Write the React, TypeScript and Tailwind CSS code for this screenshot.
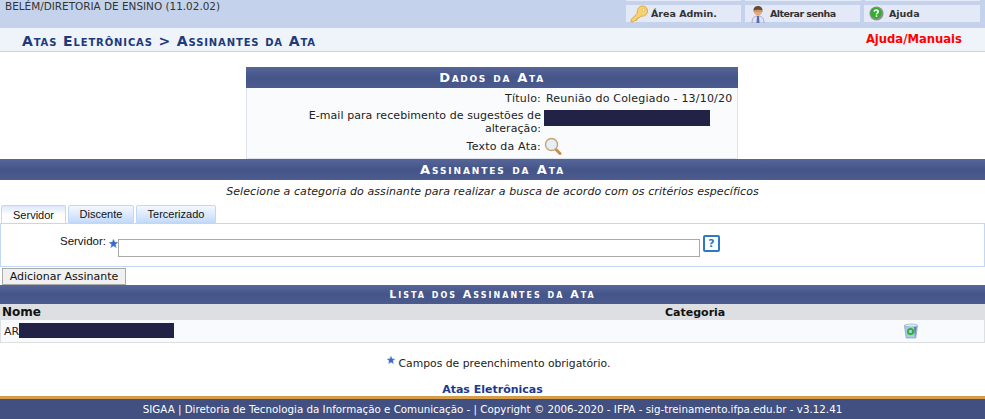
const verdana = "font-['DejaVu_Sans',Verdana,sans-serif]"

const Star = ({ className = '' }: { className?: string }) => (
  <svg viewBox="0 0 10 10" className={className}>
    <path
      d="M5 0 6.400 3.400 10 3.700 7.300 6 8.100 9.600 5 7.700 1.900 9.600 2.700 6 0 3.700 3.600 3.400Z"
      fill="#3a6bc8"
      stroke="#7fa4e2"
      strokeWidth=".4"
    />
  </svg>
)

const KeyIcon = () => (
  <svg viewBox="0 0 18 18" className="h-[18px] w-[18px]">
    <path
      d="M1 14.500 7.300 8.400C6.800 4.500 9 1 12.500 1 15.500 1 17.500 3 17.500 6c0 3.500-3.200 5.700-6.700 5.100L9.500 12.500H8V14H6.500v1.500H4.500L3 17H1Z"
      fill="#f6d36f"
      stroke="#dba94a"
      strokeWidth="1"
      strokeLinejoin="round"
    />
    <circle cx="13.500" cy="4.800" r="1.400" fill="#fdf2c4" stroke="#dba94a" strokeWidth=".6" />
  </svg>
)

const PersonIcon = () => (
  <svg viewBox="0 0 16 18" className="h-[18px] w-[16px]">
    <path d="M2 18c0-5 2-7 6-7s6 2 6 7Z" fill="#dfe5f5" stroke="#8a97c4" strokeWidth=".7" />
    <path d="M7 11h2l.5 7h-3Z" fill="#5a6aa8" />
    <circle cx="8" cy="6" r="4.400" fill="#e8a878" />
    <path d="M3.500 5.500C3.500 2 6 1 8 1s4.500 1 4.500 4.500C10 4.500 6 4.500 3.500 5.500Z" fill="#6b4a2c" />
    <rect x="3.500" y="5.500" width="9" height="1" fill="#9a8a78" />
  </svg>
)

const HelpIcon = () => (
  <svg viewBox="0 0 16 16" className="h-[15px] w-[15px]">
    <circle cx="8" cy="8" r="7.500" fill="#8f8f8f" />
    <circle cx="7.500" cy="7.500" r="6" fill="#2fb02a" />
    <path
      d="M5.500 6.200C5.600 4.800 6.500 4.300 7.600 4.300c1.300 0 2.200.7 2.200 1.800 0 1.500-1.900 1.500-1.900 3"
      fill="none"
      stroke="#fff"
      strokeWidth="1.600"
    />
    <rect x="7.100" y="10" width="1.700" height="1.700" fill="#fff" />
  </svg>
)

const LensIcon = () => (
  <svg viewBox="0 0 18 18" className="h-[18px] w-[18px]">
    <path d="M11 11.500 16 16.500" stroke="#c98f4e" strokeWidth="3" strokeLinecap="round" />
    <circle cx="7.500" cy="7.500" r="6" fill="#e6eef8" stroke="#cba56f" strokeWidth="1.400" />
  </svg>
)

const TrashIcon = () => (
  <svg viewBox="0 0 16 16" className="h-4 w-4">
    <path d="M1.500 2.500h13L12.800 15H3.200Z" fill="#a9cbe6" stroke="#6b93b3" strokeWidth=".6" />
    <ellipse cx="8" cy="2.500" rx="6.500" ry="1.500" fill="#d8e8f4" stroke="#7ea3c1" strokeWidth=".6" />
    <circle cx="7.500" cy="8.500" r="2.600" fill="none" stroke="#2fae2c" strokeWidth="1.800" />
    <path d="M11 4 12 14.700 13.500 4Z" fill="#5f8299" />
  </svg>
)

const TopButton = ({
  icon,
  label,
  className,
  labelClass = '',
}: {
  icon: React.ReactNode
  label: string
  className: string
  labelClass?: string
}) => (
  <div className={`flex h-[17px] items-center bg-[#e3e9f6] ${className}`}>
    <span className="flex w-[25px] shrink-0 justify-center">{icon}</span>
    <span className={`text-[9.500px] font-bold text-[#333] ${labelClass}`}>{label}</span>
  </div>
)

const Bar = ({ title, className = '' }: { title: string; className?: string }) => (
  <div
    className={`flex items-center justify-center bg-gradient-to-b from-[#566697] via-[#45558a] to-[#4b5b8e] font-bold text-white [font-variant:small-caps] ${className}`}
  >
    {title}
  </div>
)

const Tab = ({ label, active }: { label: string; active?: boolean }) => (
  <div
    className={`flex items-center justify-center rounded-t-[2px] border border-[#c0d8f5] font-['Liberation_Sans',Arial,sans-serif] text-[11px] text-[#111] ${
      active
        ? '-mb-px h-[19px] w-[65px] border-b-0 bg-gradient-to-b from-[#dbe8fb] via-white to-white'
        : 'h-[18px] bg-gradient-to-b from-[#f4f8fe] to-[#c6dcfa]'
    }`}
  >
    {label}
  </div>
)

export default function App() {
  return (
    <div className={`flex h-[419px] w-[985px] flex-col overflow-hidden bg-white text-[11px] leading-[13px] text-[#222] ${verdana}`}>
      <div className="flex h-[28px] justify-between bg-[#c4d2eb]">
        <div className="pl-[5px] text-[10.450px] text-[#333]">BELÉM/DIRETORIA DE ENSINO (11.02.02)</div>
        <div className="flex w-[359px] flex-col pr-[5px]">
          <div className="flex h-px gap-1">
            <span className="flex-1 bg-[#e3e9f6]" />
            <span className="flex-1 bg-[#e3e9f6]" />
            <span className="flex-1 bg-[#e3e9f6]" />
          </div>
          <div className="mt-1 flex gap-1">
            <TopButton className="w-[115px]" icon={<KeyIcon />} label="Área Admin." />
            <TopButton className="w-[115px]" icon={<PersonIcon />} label="Alterar senha" labelClass="tracking-[-0.55px]" />
            <TopButton className="w-[116px]" icon={<HelpIcon />} label="Ajuda" />
          </div>
        </div>
      </div>

      <div className="flex h-[24px] items-center justify-between border-b border-[#c8d3e6] bg-[#eff3fa] pl-[22px] pr-[23px]">
        <div className="pt-[3px] text-[14px] font-bold tracking-[0.87px] text-[#1c3a7c] [font-variant:small-caps]">
          Atas Eletrônicas &gt; Assinantes da Ata
        </div>
        <div className="text-[11.600px] font-bold text-[#f00]">Ajuda/Manuais</div>
      </div>

      <div className="mt-[15px] ml-[246px] w-[492px]">
        <Bar title="Dados da Ata" className="h-[21px] text-[13px] tracking-[1.700px]" />
        <div className="h-[71px] border-x border-b border-[#dfe3ee] bg-[#f9fbfd] pt-[4px] tracking-[0.2px] text-[#222]">
          <div className="flex items-center">
            <div className="w-[294px] text-right">Título:</div>
            <div className="pl-[5px]">Reunião do Colegiado - 13/10/20</div>
          </div>
          <div className="mt-[4px] flex">
            <div className="w-[294px] pl-[40px] text-right tracking-[0.07px]">E-mail para recebimento de sugestões de alteração:</div>
            <div className="ml-[3px] mt-px h-[16px] w-[166px] bg-[#212245]" />
          </div>
          <div className="mt-[2px] flex items-center">
            <div className="w-[294px] text-right">Texto da Ata:</div>
            <div className="pl-[3px]">
              <LensIcon />
            </div>
          </div>
        </div>
      </div>

      <Bar title="Assinantes da Ata" className="h-[21px] text-[13px] tracking-[1.900px]" />

      <div className="mt-[5px] text-center italic tracking-[0.07px] text-[#222]">
        Selecione a categoria do assinante para realizar a busca de acordo com os critérios específicos
      </div>

      <div className="mt-[7px] flex items-end gap-[2px] pl-[1px]">
        <Tab label="Servidor" active />
        <div className="w-[66px]">
          <Tab label="Discente" />
        </div>
        <div className="w-[80px]">
          <Tab label="Tercerizado" />
        </div>
      </div>
      <div className="flex h-[44px] items-start border border-[#c0d8f5] bg-white font-['Liberation_Sans',Arial,sans-serif] text-[11.500px]">
        <div className="w-[105px] pt-[11px] text-right text-[#111]">Servidor:</div>
        <Star className="ml-[3px] mt-[15px] h-[9px] w-[9px]" />
        <div className="mt-[15px] h-[18px] w-[582px] border border-[#a9a9a9] bg-white" />
        <div className="ml-[3px] mt-[11px] flex h-[17px] w-[17px] items-center justify-center rounded-[2px] border-2 border-[#2b7bc4] bg-white font-['DejaVu_Sans',sans-serif] text-[11px] font-bold text-[#2b7bc4]">
          ?
        </div>
      </div>

      <div className="ml-[2px] mt-px flex h-[17px] w-[124px] items-center justify-center border border-[#aaa] bg-[#f0f0f0] text-[11px] text-[#111]">
        Adicionar Assinante
      </div>

      <Bar title="Lista dos Assinantes da Ata" className="h-[19px] text-[11px] tracking-[2px]" />
      <div className="flex h-[16px] items-center bg-[#dedfe3] pl-[2px] text-[11px] font-bold text-[#111]">
        <div className="w-[663px] text-[12px]">Nome</div>
        <div>Categoria</div>
      </div>
      <div className="flex h-[23px] items-center border-x border-b border-[#dedfe3] bg-[#f9fafd] pl-[3px]">
        <span className="w-[15px] text-[#222]">AR</span>
        <span className="-mt-[2px] h-[15px] w-[155px] bg-[#212245]" />
        <span className="ml-[729px]">
          <TrashIcon />
        </span>
      </div>

      <div className="mt-[13px] flex justify-center pl-[12px] text-[10.800px] text-[#222]">
        <Star className="mr-[4px] h-[8px] w-[8px]" />
        <span className="pt-px">Campos de preenchimento obrigatório.</span>
      </div>

      <div className="mt-[13px] text-center text-[11px] font-bold leading-[13px] text-[#1c3a8c]">Atas Eletrônicas</div>

      <div className="mt-auto flex h-[23px] items-center justify-center border-t-[3px] border-[#d59c4a] bg-[#414f81] text-[10.300px] text-white">
        SIGAA | Diretoria de Tecnologia da Informação e Comunicação - | Copyright © 2006-2020 - IFPA - sig-treinamento.ifpa.edu.br - v3.12.41
      </div>
    </div>
  )
}
